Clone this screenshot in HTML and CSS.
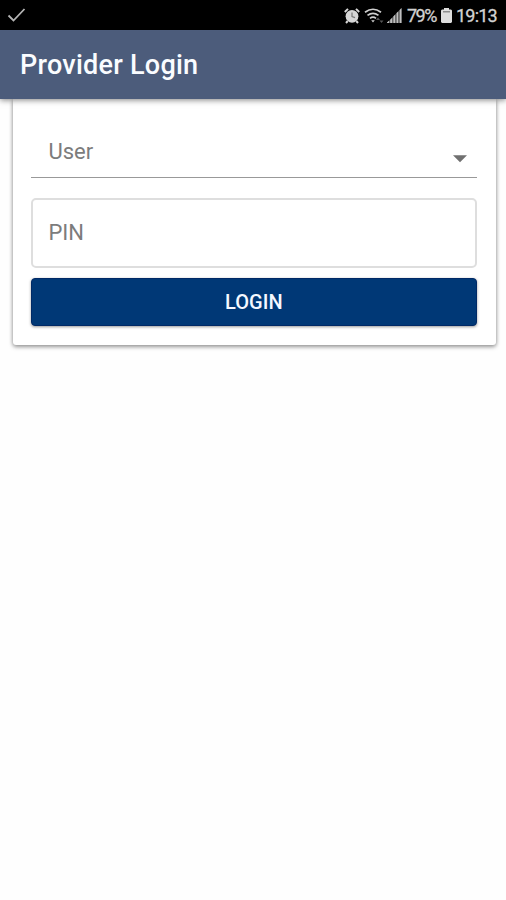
FILE: index.html
```html
<!DOCTYPE html>
<html lang="en">
<head>
<meta charset="utf-8">
<title>Provider Login</title>
<link rel="stylesheet" href="styles.css">
</head>
<body>
<div class="status">
  <svg class="check" width="20" height="16" viewBox="0 0 20 16"><path d="M1.5 7.5 6.5 12.5 17.5 1" fill="none" stroke="#b5b5b5" stroke-width="1.8"/></svg>
  <div class="status-right">
    <svg class="alarm" width="16" height="16" viewBox="0 0 16 16"><circle cx="8" cy="8.3" r="6.4" fill="#d6d6d6"/><path d="M.8 4 4 .9M12 .9 15.2 4M3.7 13 2 15M12.3 13 14 15" stroke="#d6d6d6" stroke-width="2"/><path d="M8 4.6V8.6L11 9.6" fill="none" stroke="#777" stroke-width="1.2"/></svg>
    <svg class="wifi" width="20" height="16" viewBox="0 0 20 16"><g fill="none" stroke="#d0d0d0" stroke-width="1.7"><path d="M1 4.3Q9 -1.8 17 4.3"/><path d="M3.5 7.4Q9 3.2 14.5 7.4"/><path d="M6 10.4Q9 8 12 10.4"/></g><path d="M7.2 12.2H10.8L9 14.5Z" fill="#d0d0d0"/><path d="M12 12 14 9.5 16 12ZM15.5 12.5H19.5L17.5 15Z" fill="#555"/></svg>
    <svg class="signal" width="15" height="15" viewBox="0 0 15 15"><path d="M0 15 14.5 0V15Z" fill="#555"/><g fill="#c0c0c0"><path d="M0 15V14.6L2 12.8V15ZM3.2 15V11.8L5.2 9.8V15Z"/><path d="M6.4 15V8.5L8.2 6.6V15ZM9.6 15V5.1L11.2 3.5V15ZM12.7 15V2L14.5 0V15Z"/></g></svg>
    <span class="percent">79%</span>
    <svg class="battery" width="11" height="15" viewBox="0 0 11 15"><path d="M3 0H8V1.5H10L11 2.5V14L10 15H1L0 14V2.5L1 1.5H3Z" fill="#dedede"/><path d="M2 3.8H9" stroke="#777" stroke-width="1.2"/></svg>
    <span class="clock">19:13</span>
  </div>
</div>
<header class="appbar"><h1>Provider Login</h1></header>
<main class="card">
  <div class="select">
    <span>User</span>
    <svg class="arrow" width="14" height="8" viewBox="0 0 14 8"><path d="M0 .3H14L7 7.3Z" fill="#707070"/></svg>
  </div>
  <div class="pin"><span>PIN</span></div>
  <button class="login" type="button"><span>LOGIN</span></button>
</main>
</body>
</html>
```
FILE: styles.css
```css
* { box-sizing: border-box; }
body {
  margin: 0;
  min-height: 900px;
  background: #fefefe;
  font-family: Roboto, sans-serif;
}
.status {
  height: 30px;
  background: #000;
  display: flex;
  align-items: center;
  justify-content: space-between;
  padding: 1px 9px 0 7px;
  color: #d2d2d2;
  font-size: 18px;
  line-height: 30px;
  -webkit-text-stroke: .3px #d2d2d2;
}
.status-right { display: flex; align-items: center; }
.wifi { margin-left: 4px; }
.signal { margin-left: 3px; }
.percent { margin-left: 5px; width: 30px; }
.percent, .clock { display: flex; white-space: nowrap; letter-spacing: -0.8px; }
.percent { letter-spacing: -1.5px; }
.battery { margin-left: 4px; }
.clock { margin-left: 4px; width: 41px; }
.appbar {
  position: relative;
  height: 69px;
  background: #4c5c7b;
  box-shadow: 0 1px 6px rgba(0, 0, 0, .5);
  display: flex;
  align-items: center;
  padding-left: 20px;
}
h1 {
  margin: 0;
  color: #fafcff;
  font-size: 27px;
  line-height: 32px;
  font-weight: 500;
  letter-spacing: .25px;
}
.card {
  margin: 0 10px 0 13px;
  height: 246px;
  padding: 20px 19.5px 0 18.4px;
  background: #fff;
  border-radius: 0 0 3px 3px;
  box-shadow: 0 2px 4px rgba(0, 0, 0, .35), 0 0 4px rgba(0, 0, 0, .22);
}
.select {
  height: 59px;
  border-bottom: 1px solid #999;
  padding: 6px 9.5px 0 17px;
  display: flex;
  align-items: center;
  justify-content: space-between;
  font-size: 22px;
  color: #7c7c7c;
}
.arrow { margin-top: 15px; }
.pin {
  margin-top: 20px;
  height: 70px;
  border: 2px solid #dedede;
  border-radius: 5px;
  display: flex;
  align-items: center;
  padding: 0 0 2px 15px;
  font-size: 22px;
  color: #7c7c7c;
}
.login {
  display: flex;
  align-items: center;
  justify-content: center;
  width: 100%;
  height: 48px;
  margin-top: 10px;
  padding: 0;
  border: 1px solid #002966;
  border-radius: 4px;
  background: #003876;
  box-shadow: 0 1px 3px rgba(0, 0, 0, .4);
  color: #f5f8ff;
  font: 500 20px/24px Roboto, sans-serif;
  letter-spacing: .1px;
}
```
